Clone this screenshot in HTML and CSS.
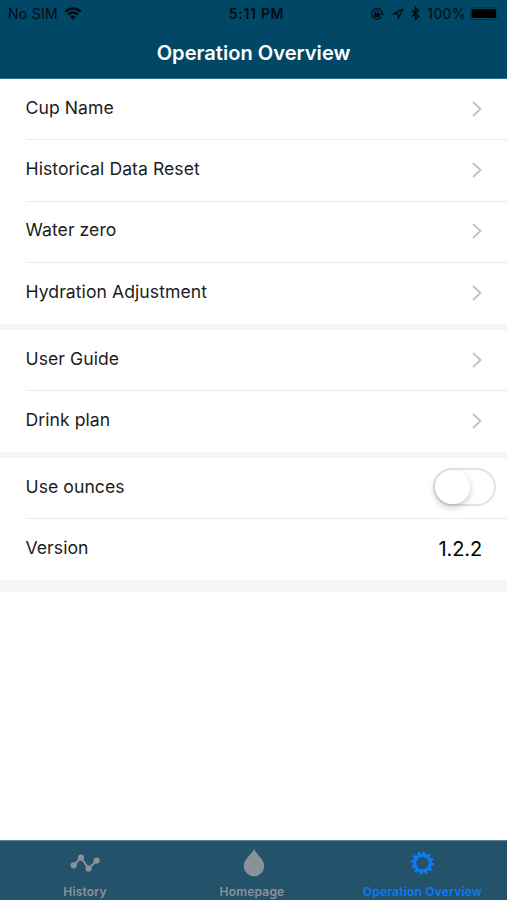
FILE: index.html
```html
<!DOCTYPE html>
<html lang="en">
  <head>
    <title>Operation Overview</title>
    <meta charset="utf-8" />
    <meta name="viewport" content="width=device-width, initial-scale=1" />
    <link rel="stylesheet" href="styles.css">
  </head>
  <body>
    <header class="header">
      <div class="status-bar">
        <div class="status-left">
          <span>No SIM</span>
          <svg class="wifi" width="18" height="13" viewBox="0 0 18 13">
            <path d="M1.3 4.7a11 11 0 0 1 15.4 0M4 7.6a7.2 7.2 0 0 1 10 0" fill="none" stroke="currentColor" stroke-width="2.5" />
            <path d="M6 9.8a4.4 4.4 0 0 1 6 0l-3 3z" fill="currentColor" />
          </svg>
        </div>
        <div class="status-time">5:11 PM</div>
        <div class="status-right">
          <svg width="14" height="14" viewBox="0 0 14 14">
            <path d="M11.3 10.2a5.4 5.4 0 1 1 1.1-3.3" fill="none" stroke="currentColor" stroke-width="1.2" />
            <path d="M10.3 6.2h3.6l-1.8 2.5z" fill="currentColor" />
            <rect x="4" y="6" width="6" height="4.2" rx=".5" fill="currentColor" />
            <path d="M5.3 6.5V5.2a1.7 1.7 0 0 1 3.4 0v1.3" fill="none" stroke="currentColor" stroke-width="1" />
          </svg>
          <svg class="location" width="12" height="12" viewBox="0 0 12 12">
            <path d="M11 1 1.2 5.9h4.9v4.9z" fill="none" stroke="currentColor" stroke-width="1.2" stroke-linejoin="round" />
          </svg>
          <svg class="bluetooth" width="9" height="15" viewBox="0 0 9 15">
            <path d="M1 4.4l6.5 6L4.4 13.4V1.4l3.1 3L1 10.5" fill="none" stroke="currentColor" stroke-width="1.6" />
          </svg>
          <span class="charge">100%</span>
          <svg class="battery" width="30" height="13" viewBox="0 0 30 13">
            <rect x=".5" y=".5" width="26.5" height="12" rx="2.5" fill="none" stroke="#00374f" />
            <rect x="1.5" y="2" width="24.5" height="9" rx="1" fill="#000" />
            <path d="M28.2 4.5q1.5 2 0 4z" fill="#00374f" />
          </svg>
        </div>
      </div>
      <h1 class="title">Operation Overview</h1>
    </header>

    <main class="settings">
      <ul class="group">
        <li class="row">
          <span>Cup Name</span>
          <svg class="chevron" viewBox="0 0 10 16"><path d="M1 1l7.5 7L1 15" /></svg>
        </li>
        <li class="row row-tall">
          <span>Historical Data Reset</span>
          <svg class="chevron" viewBox="0 0 10 16"><path d="M1 1l7.5 7L1 15" /></svg>
        </li>
        <li class="row row-raised">
          <span>Water zero</span>
          <svg class="chevron" viewBox="0 0 10 16"><path d="M1 1l7.5 7L1 15" /></svg>
        </li>
        <li class="row row-raised">
          <span>Hydration Adjustment</span>
          <svg class="chevron" viewBox="0 0 10 16"><path d="M1 1l7.5 7L1 15" /></svg>
        </li>
      </ul>
      <ul class="group">
        <li class="row">
          <span>User Guide</span>
          <svg class="chevron" viewBox="0 0 10 16"><path d="M1 1l7.5 7L1 15" /></svg>
        </li>
        <li class="row">
          <span>Drink plan</span>
          <svg class="chevron" viewBox="0 0 10 16"><path d="M1 1l7.5 7L1 15" /></svg>
        </li>
      </ul>
      <ul class="group group-last">
        <li class="row row-switch">
          <span>Use ounces</span>
          <span class="switch"><span class="knob"></span></span>
        </li>
        <li class="row">
          <span>Version</span>
          <span class="version">1.2.2</span>
        </li>
      </ul>
    </main>

    <nav class="tab-bar">
      <a class="tab">
        <svg width="30" height="28" viewBox="0 0 30 28">
          <path d="M3.5 16.5 11 8.5l7.500 11L27 11.500" fill="none" stroke="currentColor" stroke-width="2" />
          <g fill="currentColor">
            <circle cx="3.7" cy="16.3" r="3.1" />
            <circle cx="11" cy="8.7" r="3.1" />
            <circle cx="18.6" cy="19.5" r="3.1" />
            <circle cx="26.6" cy="11.5" r="3.1" />
          </g>
        </svg>
        <span class="tab-label-history">History</span>
      </a>
      <a class="tab">
        <svg width="30" height="28" viewBox="0 0 30 28">
          <path d="M15 0c2 5 10.3 10.5 10.3 17a10.300 10.300 0 0 1-20.600 0C4.700 10.500 13 5 15 0z" fill="currentColor" />
        </svg>
        <span class="tab-label-home">Homepage</span>
      </a>
      <a class="tab active">
        <svg width="30" height="28" viewBox="0 0 30 28">
          <circle cx="14.5" cy="14" r="7.9" fill="none" stroke="currentColor" stroke-width="3.2" />
          <circle cx="14.5" cy="14" r="10" fill="none" stroke="currentColor" stroke-width="3" stroke-dasharray="2.7 2.536" />
        </svg>
        <span>Operation Overview</span>
      </a>
    </nav>
  </body>
</html>
```
FILE: styles.css
```css
* {
	box-sizing: border-box;
}

body {
	display: flex;
	flex-direction: column;
	height: 900px;
	margin: 0;
	overflow: hidden;
	background: #fff;
	color: #1c1c1c;
	font-family: Inter, "Liberation Sans", sans-serif;
	font-size: 17.6px;
}

svg {
	display: block;
	flex-shrink: 0;
}

/* Header */

.header {
	height: 79px;
	background: #004866;
	border-bottom: 1px solid #2f6c85;
}

.status-bar {
	display: grid;
	grid-template-columns: 1fr auto 1fr;
	align-items: center;
	height: 27px;
	padding: 0 7px 0 8px;
	color: #000d14;
	font-size: 14px;
	white-space: nowrap;
}

.status-left,
.status-right {
	display: flex;
	align-items: center;
}

.status-left {
	letter-spacing: 0.3px;
}

.status-right {
	justify-content: flex-end;
}

.wifi {
	margin-left: 6px;
}

.status-time {
	padding-left: 5px;
	font-weight: 600;
	letter-spacing: 0.7px;
}

.location {
	margin-left: 8px;
}

.bluetooth {
	margin-left: 7px;
}

.charge {
	margin-left: 7px;
	letter-spacing: 0.4px;
}

.battery {
	margin-left: 4px;
}

.title {
	margin: 0;
	color: #fff;
	font-size: 20.1px;
	font-weight: 600;
	line-height: 52px;
	text-align: center;
}

/* Settings list */

.settings {
	flex: 1;
}

.group {
	margin: 0;
	padding: 0 0 0 25.5px;
	list-style: none;
	border-bottom: 6px solid #f5f5f5;
}

.group-last {
	border-bottom-width: 12px;
}

.row {
	display: flex;
	align-items: center;
	justify-content: space-between;
	height: 61px;
	padding: 0 25px 3px 0;
	border-bottom: 1px solid #ebebeb;
	letter-spacing: 0.06px;
}

.row-tall {
	height: 62px;
	padding-bottom: 5px;
}

.row-raised {
	padding-bottom: 5px;
}

.row:last-child {
	padding-bottom: 5px;
	border-bottom: 0;
}

.chevron {
	width: 10px;
	height: 16px;
	margin-top: 3px;
	fill: none;
	stroke: #c4c4c6;
	stroke-width: 2;
}

.row-switch {
	padding-right: 11px;
}

.switch {
	width: 63px;
	height: 38px;
	margin-top: 1px;
	border: 2px solid #e4e4e4;
	border-radius: 19px;
}

.knob {
	display: block;
	width: 35px;
	height: 34px;
	border-radius: 17px;
	background: #fff;
	box-shadow: 0 3px 7px rgba(0, 0, 0, 0.22);
}

.version {
	margin-top: 4px;
	color: #000;
	font-size: 20px;
	letter-spacing: -0.1px;
}

/* Tab bar */

.tab-bar {
	display: grid;
	grid-template-columns: repeat(3, 1fr);
	height: 60px;
	background: #25526b;
	border-top: 1px solid #5c8295;
}

.tab {
	display: flex;
	flex-direction: column;
	align-items: center;
	padding-top: 8px;
	color: #8a9299;
	font-size: 12px;
	font-weight: 600;
	letter-spacing: 0.2px;
	line-height: 15px;
	white-space: nowrap;
}

.tab span {
	margin-top: 7px;
}

.tab .tab-label-history {
	margin-left: 1px;
}

.tab .tab-label-home {
	margin-right: 3px;
}

.tab.active {
	color: #0a7cf5;
}
```
